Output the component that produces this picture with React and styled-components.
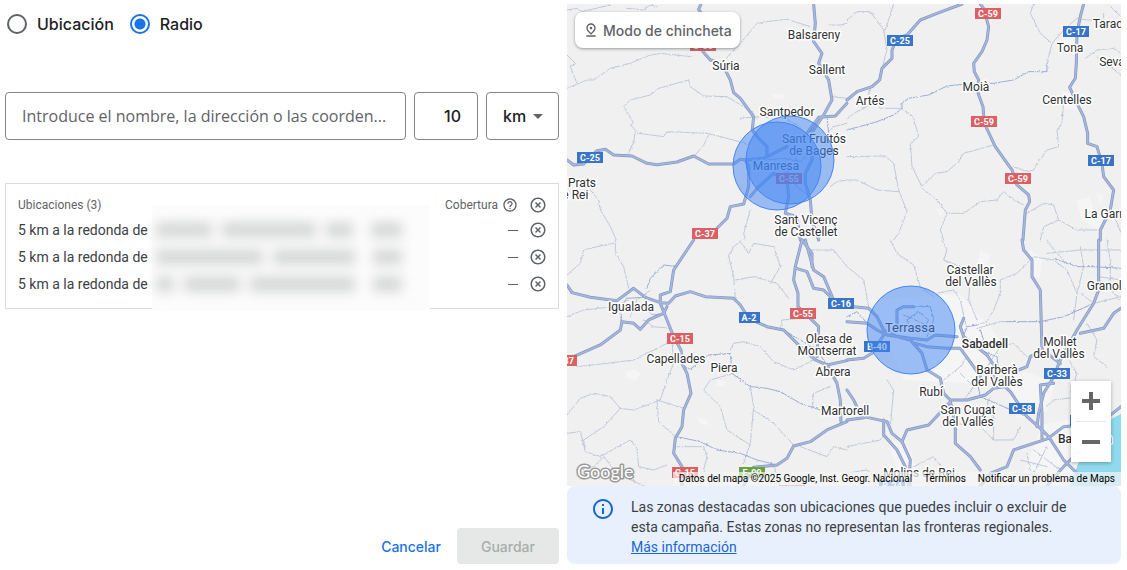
import React, { useState } from 'react';
import styled, { createGlobalStyle } from 'styled-components';
import { MdArrowDropDown, MdHelpOutline, MdHighlightOff, MdInfoOutline, MdOutlinePinDrop } from 'react-icons/md';

const GlobalStyle = createGlobalStyle`
  * {
    box-sizing: border-box;
  }

  body {
    margin: 0;
    background: #fff;
    color: #3c4043;
    font-family: Roboto, "Liberation Sans", sans-serif;
    font-size: 14px;
  }

  button, input, select {
    font-family: inherit;
  }
`;

const displayFont = '"Google Sans", Inter, Roboto, sans-serif';

const Page = styled.main`
  display: grid;
  grid-template-columns: minmax(0, 1fr) minmax(0, 1fr);
  gap: 8px;
  min-height: 100vh;
  padding: 4px 6px 6px 5px;
`;

const Editor = styled.form`
  display: flex;
  flex-direction: column;
`;

const ModeGroup = styled.div`
  display: flex;
  align-items: center;
  gap: 16px;
  height: 40px;
  padding-left: 2px;
`;

const ModeOption = styled.label`
  display: flex;
  align-items: center;
  gap: 10px;
  color: #202124;
  font: 500 16px/20px ${displayFont};
  cursor: pointer;

  input {
    appearance: none;
    width: 20px;
    height: 20px;
    margin: 0;
    border: 2px solid #5f6368;
    border-radius: 50%;
  }

  input:checked {
    border-color: #1a73e8;
    background: radial-gradient(circle, #1a73e8 5px, transparent 6px);
  }
`;

const SearchRow = styled.div`
  display: flex;
  gap: 8px;
  margin: 48px 0 43px;
`;

const Field = styled.input`
  flex: ${(props) => (props.$narrow ? '0 0 64px' : '1 1 0')};
  min-width: 0;
  height: 48px;
  padding: 0 16px;
  border: 1px solid #80868b;
  border-radius: 4px;
  background: #fff;
  color: #202124;
  font: ${(props) => (props.$narrow ? `500 16px ${displayFont}` : '400 16px "Google Sans", "Open Sans", sans-serif')};
  text-align: ${(props) => (props.$narrow ? 'right' : 'left')};
  text-overflow: ellipsis;

  &::placeholder {
    color: #5f6368;
    opacity: 1;
  }
`;

const UnitBox = styled.div`
  display: grid;
  flex: 0 0 73px;
  align-items: center;

  select,
  svg {
    grid-area: 1 / 1;
  }

  select {
    appearance: none;
    width: 100%;
    height: 48px;
    padding: 0 16px;
    border: 1px solid #80868b;
    border-radius: 4px;
    background: #fff;
    color: #202124;
    font: 500 16px ${displayFont};
  }

  svg {
    justify-self: end;
    margin-right: 9px;
    color: #5f6368;
    pointer-events: none;
  }
`;

const Panel = styled.section`
  position: relative;
  padding: 9px 0 10px;
  border: 1px solid #dadce0;
`;

const LocationTable = styled.table`
  width: 100%;
  border-collapse: collapse;

  th,
  td {
    height: 27px;
    padding: 0;
    font-weight: 400;
    line-height: 20px;
    text-align: left;
  }

  th {
    height: 24px;
    color: #5f6368;
    font-size: 12px;
  }

  td {
    padding-bottom: 2px;
  }

  th:first-child,
  td:first-child {
    padding-left: 12px;
  }
`;

const CoverageHead = styled.span`
  display: flex;
  align-items: center;
  justify-content: flex-end;
  gap: 4px;
`;

const Dash = styled.span`
  display: block;
  width: 10px;
  height: 1px;
  margin: 2px 0 0 auto;
  background: #5f6368;
`;

const RemoveButton = styled.button`
  display: flex;
  justify-content: center;
  width: 40px;
  padding: 0;
  border: 0;
  background: none;
  color: #5f6368;
  cursor: pointer;
`;

const HiddenNames = styled.div`
  position: absolute;
  top: 21px;
  left: 146px;
  display: grid;
  grid-template-rows: repeat(3, 27px);
  width: 278px;
  height: 106px;
  padding: 11px 28px 0 4px;
  background: #fcfcfc;
`;

const HiddenName = styled.div`
  display: flex;
  align-items: center;
  gap: 10px;
  filter: blur(6px);
`;

const Smudge = styled.span`
  flex: ${(props) => props.$grow} 1 0;
  height: 16px;
  background: #d6d8d7;

  &:last-child {
    margin-left: 8px;
  }
`;

const Actions = styled.div`
  display: flex;
  justify-content: flex-end;
  gap: 16px;
  margin-top: auto;
`;

const ActionButton = styled.button`
  height: 36px;
  padding: ${(props) => (props.$filled ? '0 24px' : '0')};
  border: 0;
  border-radius: 4px;
  background: ${(props) => (props.$filled ? '#e6e8e7' : 'none')};
  color: ${(props) => (props.$filled ? '#a9adab' : '#1a73e8')};
  font: 500 14px ${displayFont};
`;

const MapColumn = styled.div`
  display: flex;
  flex-direction: column;
`;

const MapArea = styled.section`
  position: relative;
  flex: 1;
  overflow: hidden;
  background: #f0f0f0;
`;

const MapDrawing = styled.svg`
  position: absolute;
  inset: 0;
  width: 100%;
  height: 100%;
  font-family: Roboto, sans-serif;
`;

const PinButton = styled.button`
  position: absolute;
  top: 8px;
  left: 8px;
  display: flex;
  align-items: center;
  gap: 4px;
  height: 36px;
  padding: 0 8px;
  border: 0;
  border-radius: 8px;
  background: #fff;
  box-shadow: 0 1px 3px rgba(60, 64, 67, 0.5);
  color: #5f6368;
  font: 500 14px ${displayFont};
`;

const ZoomControl = styled.div`
  position: absolute;
  right: 10px;
  bottom: 24px;
  width: 40px;
  padding: 0 5px;
  background: #fff;
  box-shadow: 0 1px 4px rgba(0, 0, 0, 0.3);
`;

const ZoomButton = styled.button`
  display: grid;
  place-items: center;
  width: 30px;
  height: 40px;
  padding: 0;
  border: 0;
  background: none;
  color: #666;

  & + & {
    height: 41px;
    border-top: 1px solid #e6e6e6;
  }
`;

const Attribution = styled.div`
  position: absolute;
  right: 0;
  bottom: 0;
  display: flex;
  gap: 12px;
  padding: 0 6px;
  background: rgba(245, 245, 245, 0.7);
  color: #000;
  font-size: 10px;
  line-height: 14px;
  white-space: nowrap;

  a {
    color: inherit;
    text-decoration: none;
  }
`;

const Notice = styled.aside`
  display: flex;
  gap: 16px;
  padding: 11px 32px 7px 24px;
  border-radius: 8px;
  background: #e8f0fe;
  line-height: 20px;

  svg {
    flex: none;
    color: #1967d2;
  }

  p {
    margin: 0;
  }

  a {
    color: #1967d2;
  }
`;

// Roads are grouped in four tiles, drawn at three times the size of the map.
const tiles = [
  {
    x: 567,
    y: 0,
    major: [
      '0,480 20,495 50,492 90,452 115,448 140,465 195,468 240,490 270,494 330,486 380,468 425,492 500,492 520,478 540,480 590,475 660,440',
      '402,12 395,28 410,52 408,155 430,180 465,190 490,240 500,278 520,295 560,350 556,390 575,415 600,440 600,470',
      '740,12 745,70 740,125 765,160 755,190 785,240 795,300 770,345 740,390 720,405',
      '840,310 805,348 755,352 720,400',
      '450,685 480,655 490,620 530,612 545,560 545,500 535,480',
      '550,590 575,560 620,520 660,540 665,590 655,640 690,650 700,720',
      '735,440 735,480 715,520 715,550 730,600 735,660 755,720',
    ],
    mid: ['600,480 650,475 700,485 740,450', '640,500 690,560 730,590', '780,350 785,400 760,430', '680,430 690,490 650,530'],
    minor: [
      '0,265 60,240 80,240 130,205 190,190 250,165 280,160 370,170',
      '0,30 30,25 45,35 130,15',
      '180,25 230,30 250,15 270,20',
      '30,250 10,200 25,190 0,165',
      '365,240 275,265 250,285 190,300 170,320 200,370 190,375 215,400 290,410 300,395 420,400 480,415 540,432',
      '365,240 370,260 410,288 480,290 530,320 560,340',
      '205,395 200,425 185,460',
      '425,405 410,435 385,465',
      '465,190 500,150 520,130 570,70 600,65 660,58 730,80',
      '840,70 820,75 790,75',
      '840,540 810,545 790,560',
      '70,570 95,600 100,630 130,680 148,720',
      '550,630 530,700 535,720',
      '770,410 800,380 840,370',
      '795,290 840,295',
      '520,355 580,350 640,350 700,380',
    ],
  },
  {
    x: 847,
    y: 0,
    major: [
      '345,12 270,40 220,60 180,105 150,115 135,150 135,175 105,205 98,240 75,260 30,275 0,300',
      '400,12 410,25 425,80 420,120 405,155 380,190 382,215 395,240 390,270 408,320 412,370 445,440 470,475 495,510 510,555 545,585 548,605 535,630 528,720',
      '710,12 700,50 690,100 688,190 685,235 668,262 690,310 710,350 722,400 722,430 750,440 765,490 770,530 800,570 790,630 760,690 760,720',
    ],
    mid: [
      '0,390 55,375 90,365 140,345 165,325 165,310 185,295 245,285 300,258 360,252 440,250 500,240 545,215 600,215 600,190',
    ],
    minor: [
      '600,190 615,130 650,90 690,55 720,60 770,60 770,40',
      '0,60 30,35 70,35 110,90 120,150 105,205',
      '140,12 115,90',
      '560,12 550,40 580,100 615,130',
      '70,265 65,285 100,325 165,325 200,355 215,410 190,430 195,500 225,560 265,520 300,515 335,485 350,460 440,435',
      '225,565 270,600 300,640 280,690 290,720',
      '300,640 350,640 400,605 450,600 470,575 500,600 530,615',
      '0,470 115,468 140,490 155,570 180,635 155,700 140,720',
      '0,540 30,540 90,570 155,575',
      '690,310 650,300 645,370 630,390 635,440 600,450 570,490 560,510 540,515 500,500',
      '540,640 590,610 620,615 635,660 590,680 580,720',
      '635,660 690,690 750,690',
      '715,175 750,150 800,145 822,160',
      '750,170 790,200 822,225',
      '790,20 822,50',
      '0,355 30,335 60,320',
      '800,640 822,700',
    ],
  },
  {
    x: 567,
    y: 240,
    major: [
      '0,135 15,158 70,172 150,182 200,145 235,172 280,188 305,190 325,168 370,155 415,170 500,175 520,195 545,235 600,260 650,270 700,320 745,360 780,375 840,362',
      '380,0 360,30 320,90 310,155 280,165 280,190 300,240 320,290 342,330 345,370 360,400 372,460 350,510 345,560 325,595 320,640 345,680 345,738',
      '20,350 100,315 160,270 165,245 200,250 220,268 245,240 290,220 300,200',
      '705,0 685,80 680,120 693,160 693,200 730,235 755,260 750,350',
      '715,0 740,90 770,110 800,180',
      '688,85 720,95 740,145 770,150 800,180 840,190',
      '840,545 780,570 730,605 680,618 660,655 630,675 560,682 530,738',
      '780,375 810,430 820,480 822,545',
      '705,0 735,40 735,80',
    ],
    mid: [
      '495,400 550,440 600,445 640,455 700,490 760,510',
      '330,590 400,605 450,630 520,640 570,660 630,675',
      '345,375 370,388 425,345 490,340 495,400',
      '240,145 250,115 290,75 330,80',
      '165,245 160,200 180,175 235,172',
      '200,215 240,210 260,225 290,220',
      '650,270 700,300 750,330 780,375',
    ],
    minor: [
      '0,105 40,70 50,30 90,20 140,10',
      '145,0 145,40 170,80 185,145',
      '0,230 50,210 140,200 185,180',
      '30,380 120,370 200,360 240,340 300,310',
      '0,525 40,475 80,460 130,470 160,505 200,510 280,480 300,420 320,370 315,300',
      '160,505 110,560 50,600 55,635',
      '270,480 350,505',
      '270,480 275,545 325,590',
      '490,330 500,310 530,305 580,320 620,365 680,390 740,360',
      '500,400 430,420 410,450 460,500 480,570 550,615',
      '560,510 620,550 680,615',
      '550,440 560,500 550,610 530,670',
      '500,20 485,50 500,110 505,175',
      '505,120 560,110 630,130 665,175',
      '500,20 520,5 545,40 560,10 620,20 640,80 610,130',
      '640,270 645,240 700,235',
      '0,580 40,575 55,635 100,650 190,600 210,625 215,680 260,690 300,675',
      '30,690 80,680 110,650 150,700 230,738',
      '410,620 420,650 410,690 430,738',
      '325,620 410,620',
      '620,680 640,738',
      '700,620 780,650 800,620 840,630',
      '735,505 740,460 790,440',
      '730,30 800,30 840,80',
      '190,230 210,180 250,150',
      '230,240 260,260 310,265',
    ],
  },
  {
    x: 847,
    y: 240,
    major: [
      '0,245 60,250 90,270 120,285 190,295 240,300 265,285 330,290',
      '20,200 65,205 90,230 110,270 150,290 190,300 225,340 240,390 280,415 290,460 310,480 360,480 415,465 440,445 470,440',
      '205,310 240,320 300,325 340,325 380,380 400,410',
      '0,360 50,355 75,340 110,285',
      '350,235 340,260 350,290 420,345 440,375',
      '430,400 490,455 540,530 580,565 605,590 650,660 690,700',
      '0,450 20,480 40,525 50,530 120,545 135,580 165,605 190,660 185,738',
      '110,540 110,585 150,630 175,680 190,738',
      '0,540 50,533',
      '165,605 180,570 245,555 310,485 325,550 325,610 370,650 400,690',
      '755,0 755,150 740,190 690,270 640,360 620,410 590,460 575,520 570,560',
      '610,590 650,560 760,550 822,500',
      '822,205 800,220 770,265 700,280',
      '525,0 530,30 555,60 555,110 580,150 585,330 550,350 540,380 515,390',
      '605,595 500,630 480,680 430,700 400,738',
      '585,595 585,520 580,435 620,430',
      '690,640 650,680 600,738',
      '585,330 640,370',
      '150,265 150,210 170,200 200,200',
    ],
    mid: [
      '200,200 250,200 260,240 240,290',
      '180,240 215,215 245,240 230,265 190,265 180,240',
      '170,225 250,260',
      '390,255 360,260 345,300',
      '400,330 450,350 455,400',
      '0,230 30,215 60,250',
      '480,245 580,245 650,230 740,190',
      '390,420 400,470 470,500 540,530',
      '380,320 410,300 400,270',
      '620,55 690,80 740,80 822,85',
    ],
    minor: [
      '130,0 150,40 200,75 220,140 260,170',
      '0,80 50,120 65,200',
      '285,0 300,30 290,60 340,80 370,110 365,180 390,240',
      '390,255 420,245 440,210 460,160 460,120 510,100 560,50 620,60 660,90 690,160',
      '600,0 620,30 660,70',
      '600,40 700,30 822,30',
      '700,20 710,80 690,160 680,240',
      '780,0 790,60 790,150 822,180',
      '390,265 460,245 480,245',
      '270,160 320,150 340,180 360,270',
      '290,420 340,380 360,350',
      '400,410 460,320 500,310 540,350',
      '325,550 400,560 440,600 500,600 520,560',
      '440,600 440,530 420,490 430,470',
      '600,500 620,480 700,470',
      '0,620 100,600 110,585',
      '200,680 260,650 290,690',
      '540,640 560,738',
      '600,620 560,700',
      '520,660 600,680',
      '560,630 640,690',
      '500,700 620,710',
      '130,560 140,450 120,420',
      '720,250 750,300 740,350 780,380',
      '660,350 690,400 670,460',
      '755,110 822,120',
      '700,160 740,190 822,170',
      '340,400 380,440 350,480',
      '0,700 60,690 120,738',
    ],
  },
];

const places = [
  ['Balsareny', 814, 39], ['Sallent', 827, 74], ['Súria', 726, 70], ['Santpedor', 787, 116],
  ['Sant Fruitós', 814, 143], ['de Bages', 814, 155], ['Manresa', 776, 170], ['Artés', 870, 105],
  ['Moià', 976, 91], ['Tona', 1070, 52], ['Centelles', 1067, 104], ['Sant Vicenç', 806, 224],
  ['de Castellet', 806, 236], ['Igualada', 631, 311], ['Capellades', 676, 363], ['Piera', 724, 372],
  ['Olesa de', 829, 343], ['Montserrat', 827, 355], ['Abrera', 833, 376], ['Martorell', 845, 415],
  ['Castellar', 970, 274], ['del Vallès', 971, 286], ['Barberà', 997, 374], ['del Vallès', 997, 386],
  ['Mollet', 1060, 346], ['del Vallès', 1059, 358], ['Rubí', 931, 396], ['San Cugat', 968, 414],
  ['del Vallés', 968, 426], ['Molins de Rei', 919, 477], ['Prats', 582, 187], ['de Rei', 572, 199],
  ['Taradell', 1114, 28], ['Seva', 1112, 66], ['La Garriga', 1112, 218], ['Granollers', 1114, 290],
];

const blue = '#3874c8';
const red = '#db5f63';
const shields = [
  ['C-25', 577, 152, blue], ['C-37', 692, 228, red], ['C-55', 776, 173, red], ['C-55', 690, 40, red],
  ['C-25', 887, 35, blue], ['C-59', 975, 8, red], ['C-59', 971, 116, red], ['C-59', 1005, 173, red],
  ['C-17', 1063, 26, blue], ['C-17', 1088, 155, blue], ['C-15', 667, 333, red], ['C-37', 551, 355, red],
  ['A-2', 739, 312, blue], ['C-55', 790, 308, red], ['C-16', 828, 298, blue], ['C-15', 672, 467, red],
  ['E-90', 739, 467, '#67a243'], ['B-40', 864, 341, blue], ['C-33', 1044, 368, blue], ['C-58', 1009, 403, blue],
  ['B-20', 1070, 415, blue], ['B-24', 879, 480, blue], ['C-32', 779, 485, red],
];

const zones = [[777, 166], [790, 160], [911, 330]];

const locations = [
  { id: 1, name: '5 km a la redonda de', smudges: [54, 92, 26, 30] },
  { id: 2, name: '5 km a la redonda de', smudges: [110, 84, 30] },
  { id: 3, name: '5 km a la redonda de', smudges: [18, 58, 108, 30] },
];

const Roads = ({ tile }) => (
  <g
    transform={`translate(${tile.x} ${tile.y}) scale(0.3333)`}
    fill="none"
    strokeLinejoin="round"
    strokeLinecap="round"
  >
    <g stroke="#c0c8da" strokeWidth="3" filter="url(#winding)">
      {tile.minor.map((points) => <polyline key={points} points={points} />)}
    </g>
    <g stroke="#9cadd3" strokeWidth="3" filter="url(#winding)">
      {tile.mid.map((points) => <polyline key={points} points={points} />)}
    </g>
    <g stroke="#8297c6" strokeWidth="9">
      {tile.major.map((points) => <polyline key={points} points={points} />)}
    </g>
    <g stroke="#a6b7d9" strokeWidth="5">
      {tile.major.map((points) => <polyline key={points} points={points} />)}
    </g>
  </g>
);

const CatalunyaMap = () => (
  <MapDrawing viewBox="567 4 554 482" preserveAspectRatio="xMidYMid slice" role="img" aria-label="Mapa">
    <defs>
      <filter id="winding" x="-5%" y="-5%" width="110%" height="110%">
        <feTurbulence type="fractalNoise" baseFrequency="0.12" numOctaves="2" seed="4" />
        <feDisplacementMap in="SourceGraphic" scale="8" xChannelSelector="R" yChannelSelector="G" />
      </filter>
    </defs>
    <g fill="#f5f5f6">
      <path d="M771 94l14 0 -2 4 -8 1zM625 372l10 -3 6 5 -6 7 -9 -4zM697 417l10 3 1 5 -8 -1zM718 380l9 2 -4 5 -7 -2zM711 134l7 -3 4 4 -8 1z" />
      <path d="M1076 200l14 -3 4 14 12 8 -8 10 -16 -8zM1096 192l8 4 -4 8zM980 250l10 6 -4 12 -8 -4zM1030 250l12 8 -2 20 -10 -4z" />
      <path d="M1005 380l20 -8 30 10 -8 30 -30 6zM1042 424l40 -6 -2 60 -60 6zM870 300l90 -6 44 50 -20 40 -80 -4zM936 208l8 3 -4 6z" />
      <path d="M852 90l14 2 2 12 -12 2zM1060 24l18 0 2 24 -18 4zM1062 92l22 2 -4 16 -16 -2zM888 440l20 6 10 26 -18 8z" />
    </g>
    <path d="M1121 414 L1109 420 L1092 440 L1078 464 L1070 486 H1121Z" fill="#8fdaee" />
    {tiles.map((tile) => <Roads key={`${tile.x}-${tile.y}`} tile={tile} />)}
    {shields.map(([name, x, y, color]) => (
      <g key={`${name}-${x}-${y}`}>
        <rect x={x} y={y} width={name.length > 3 ? 26 : 21} height="11" fill={color} />
        <text
          x={x + (name.length > 3 ? 13 : 10)}
          y={y + 9}
          fill="#fff"
          fontSize="9"
          fontWeight="700"
          textAnchor="middle"
        >
          {name}
        </text>
      </g>
    ))}
    <g fill="#2f3033" stroke="#fff" strokeWidth="3" strokeLinejoin="round" paintOrder="stroke" fontSize="12" textAnchor="middle">
      {places.map(([name, x, y]) => <text key={`${name}-${x}-${y}`} x={x} y={y}>{name}</text>)}
      <text x="910" y="332" fontSize="13">Terrassa</text>
      <text x="985" y="348" fontWeight="500">Sabadell</text>
      <text x="1085" y="443" fontWeight="500">Barcelona</text>
    </g>
    <g fill="#4285f4" fillOpacity="0.5" stroke="#4285f4" strokeWidth="1">
      {zones.map(([cx, cy]) => <circle key={cx} cx={cx} cy={cy} r="44" />)}
    </g>
    <text
      x="577"
      y="478"
      fill="#fff"
      stroke="#999"
      strokeWidth="3"
      strokeLinejoin="round"
      paintOrder="stroke"
      fontFamily="Lato, sans-serif"
      fontSize="18"
      fontWeight="400"
    >
      Google
    </text>
  </MapDrawing>
);

const App = () => {
  const [mode, setMode] = useState('radio');
  const [radius, setRadius] = useState('10');

  return (
    <>
      <GlobalStyle />
      <Page>
        <Editor onSubmit={(e) => e.preventDefault()}>
          <ModeGroup role="radiogroup">
            <ModeOption>
              <input type="radio" name="mode" checked={mode === 'location'} onChange={() => setMode('location')} />
              Ubicación
            </ModeOption>
            <ModeOption>
              <input type="radio" name="mode" checked={mode === 'radio'} onChange={() => setMode('radio')} />
              Radio
            </ModeOption>
          </ModeGroup>

          <SearchRow>
            <Field
              type="text"
              aria-label="Ubicación"
              placeholder="Introduce el nombre, la dirección o las coorden..."
            />
            <Field
              $narrow
              type="text"
              inputMode="numeric"
              aria-label="Radio"
              value={radius}
              onChange={(e) => setRadius(e.target.value)}
            />
            <UnitBox>
              <select aria-label="Unidad" defaultValue="km">
                <option value="km">km</option>
                <option value="mi">mi</option>
              </select>
              <MdArrowDropDown size={24} />
            </UnitBox>
          </SearchRow>

          <Panel>
            <LocationTable>
              <thead>
                <tr>
                  <th>Ubicaciones (3)</th>
                  <th>
                    <CoverageHead>
                      Cobertura
                      <MdHelpOutline size={16} />
                    </CoverageHead>
                  </th>
                  <th width="40">
                    <RemoveButton type="button" aria-label="Quitar todas">
                      <MdHighlightOff size={18} />
                    </RemoveButton>
                  </th>
                </tr>
              </thead>
              <tbody>
                {locations.map((location) => (
                  <tr key={location.id}>
                    <td>{location.name}</td>
                    <td><Dash /></td>
                    <td>
                      <RemoveButton type="button" aria-label="Quitar">
                        <MdHighlightOff size={18} />
                      </RemoveButton>
                    </td>
                  </tr>
                ))}
              </tbody>
            </LocationTable>
            <HiddenNames aria-hidden="true">
              {locations.map((location) => (
                <HiddenName key={location.id}>
                  {location.smudges.map((grow, i) => <Smudge key={i} $grow={grow} />)}
                </HiddenName>
              ))}
            </HiddenNames>
          </Panel>

          <Actions>
            <ActionButton type="button">Cancelar</ActionButton>
            <ActionButton type="submit" $filled disabled>Guardar</ActionButton>
          </Actions>
        </Editor>

        <MapColumn>
          <MapArea>
            <CatalunyaMap />
            <PinButton type="button">
              <MdOutlinePinDrop size={16} />
              Modo de chincheta
            </PinButton>
            <ZoomControl>
              <ZoomButton type="button" aria-label="Acercar">
                <svg width="18" height="18" fill="currentColor">
                  <path d="M7 0h4v7h7v4h-7v7H7v-7H0V7h7z" />
                </svg>
              </ZoomButton>
              <ZoomButton type="button" aria-label="Alejar">
                <svg width="18" height="18" fill="currentColor">
                  <path d="M0 7h18v4H0z" />
                </svg>
              </ZoomButton>
            </ZoomControl>
            <Attribution>
              <span>Datos del mapa ©2025 Google, Inst. Geogr. Nacional</span>
              <a href="#terminos">Términos</a>
              <a href="#notificar">Notificar un problema de Maps</a>
            </Attribution>
          </MapArea>
          <Notice>
            <MdInfoOutline size={24} />
            <p>
              Las zonas destacadas son ubicaciones que puedes incluir o excluir de esta campaña. Estas zonas no
              representan las fronteras regionales.
              <br />
              <a href="#informacion">Más información</a>
            </p>
          </Notice>
        </MapColumn>
      </Page>
    </>
  );
};

export default App;
